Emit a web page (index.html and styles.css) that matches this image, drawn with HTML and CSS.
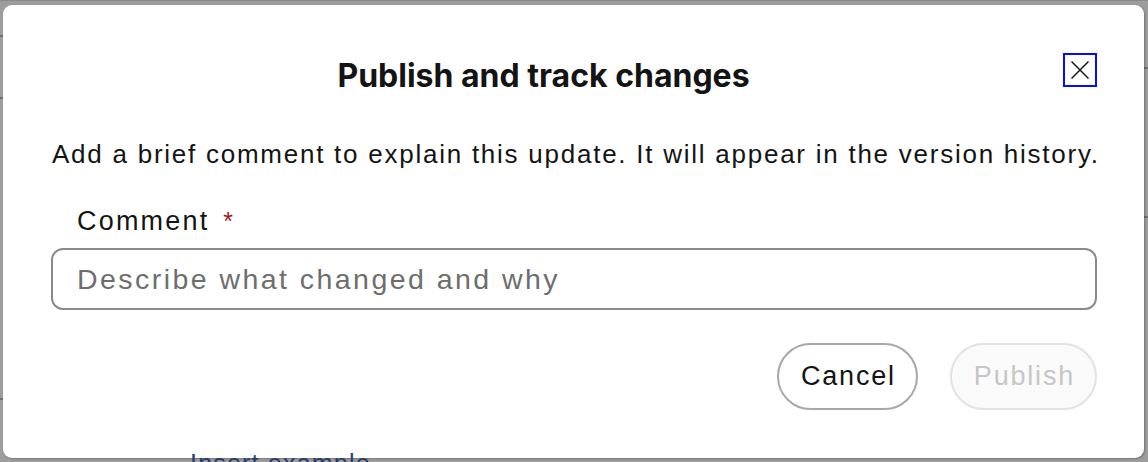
FILE: index.html
```html
<!DOCTYPE html>
<html lang="en">
<head>
<meta charset="utf-8">
<title>Publish and track changes</title>
<link rel="stylesheet" href="styles.css">
</head>
<body>
<div class="page">
  <div class="bg-lines">
    <div class="bg-line l1"></div>
    <div class="bg-line l2"></div>
    <div class="bg-line l3"></div>
    <div class="bg-line l4"></div>
    <div class="bg-line r1"></div>
  </div>
  <div class="dialog" role="dialog" aria-labelledby="dlg-title">
    <header class="dialog-header">
      <h2 id="dlg-title" class="dialog-title">Publish and track changes</h2>
      <button class="close-btn" aria-label="Close">
        <svg width="18" height="18" viewBox="0 0 18 18" aria-hidden="true">
          <path d="M0.5 0.5 L17.5 17.5 M17.5 0.5 L0.5 17.5" stroke="#1a1a1a" stroke-width="1.5" fill="none"/>
        </svg>
      </button>
    </header>
    <p class="dialog-desc">Add a brief comment to explain this update. It will appear in the version history.</p>
    <div class="field">
      <label class="field-label" for="comment">Comment <span class="req">*</span></label>
      <input id="comment" class="field-input" type="text" placeholder="Describe what changed and why">
    </div>
    <div class="actions">
      <button class="btn btn-secondary">Cancel</button>
      <button class="btn btn-primary" disabled>Publish</button>
    </div>
  </div>
  <div class="behind-text">Insert example</div>
</div>
</body>
</html>
```

FILE: styles.css
```css
* { box-sizing: border-box; }
html, body { margin: 0; padding: 0; }
body {
  width: 1148px;
  height: 462px;
  overflow: hidden;
  background: #9d9d9d;
  font-family: "Liberation Sans", Arial, sans-serif;
  color: #141414;
}
.page {
  position: relative;
  width: 1148px;
  height: 462px;
  padding: 4px 4px 4px 3px;
  border-top: 1px solid #8a8a8a;
}
.bg-lines { position: absolute; inset: 0; pointer-events: none; }
.bg-line { position: absolute; height: 2px; background: #6f6f6f; }
.l1 { left: 0; width: 6px; top: 34px; }
.l2 { left: 0; width: 6px; top: 96px; }
.l3 { left: 0; width: 6px; top: 397px; }
.l4 { right: 0; width: 6px; top: 215px; }
.r1 { right: 0; width: 6px; top: 66px; }

.dialog {
  position: relative;
  z-index: 1;
  width: 1141px;
  height: 453px;
  background: #fff;
  border-radius: 9px;
  box-shadow: 1px 1px 2px rgba(0,0,0,0.25);
  padding: 48px 47px 0 48px;
  display: flex;
  flex-direction: column;
}
.dialog-header {
  display: flex;
  align-items: flex-start;
}
.dialog-title {
  flex: 1;
  margin: 0;
  text-align: center;
  font-family: Inter, "Liberation Sans", sans-serif;
  font-weight: 700;
  font-size: 32px;
  line-height: 46px;
  color: #141414;
}
.close-btn {
  width: 34px;
  height: 34px;
  margin-left: 27px;
  border: 2px solid #0a0aff;
  background: #fff;
  padding: 0;
  display: flex;
  align-items: center;
  justify-content: center;
  cursor: pointer;
}
.dialog-desc {
  margin: 39px 0 0 1px;
  font-size: 26px;
  line-height: 32px;
  letter-spacing: 1.75px;
  white-space: nowrap;
  color: #141414;
}
.field {
  margin-top: 35px;
  display: flex;
  flex-direction: column;
}
.field-label {
  padding-left: 26px;
  font-size: 27px;
  line-height: 32px;
  letter-spacing: 2.2px;
  color: #141414;
}
.req { color: #a8121c; margin-left: 4px; font-size: 25px; }
.field-input {
  margin-top: 11px;
  height: 62px;
  width: 100%;
  border: 2px solid #8a8a8a;
  border-radius: 12px;
  padding: 0 24px;
  font-family: "Liberation Sans", Arial, sans-serif;
  font-size: 28.5px;
  letter-spacing: 2.45px;
  color: #141414;
  outline: none;
}
.field-input::placeholder { color: #6e6e6e; opacity: 1; }
.actions {
  margin-top: 33px;
  display: flex;
  justify-content: flex-end;
  gap: 32px;
}
.btn {
  height: 67px;
  padding: 0 20px 0 22px;
  border-radius: 34px;
  font-family: "Liberation Sans", Arial, sans-serif;
  font-size: 27px;
  letter-spacing: 1.8px;
  background: #fff;
  cursor: pointer;
}
.btn-secondary {
  border: 2px solid #a8a8a8;
  color: #141414;
}
.btn-primary {
  border: 2px solid #e2e2e2;
  background: #fafafa;
  color: #c6c6c6;
}
.behind-text {
  position: absolute;
  z-index: 2;
  left: 190px;
  top: 447px;
  font-size: 25px;
  line-height: 30px;
  color: #1e3f6e;
  letter-spacing: 1.2px;
}
```
